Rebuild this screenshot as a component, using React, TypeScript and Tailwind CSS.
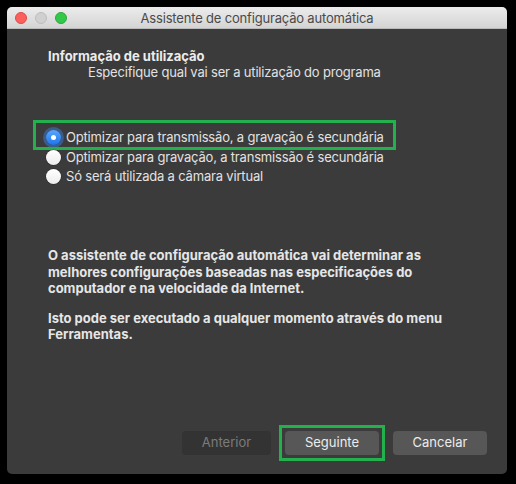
import React, { useState } from 'react';

const options = [
  'Optimizar para transmissão, a gravação é secundária',
  'Optimizar para gravação, a transmissão é secundária',
  'Só será utilizada a câmara virtual',
];

function Radio({ checked }: { checked: boolean }) {
  if (checked) {
    return (
      <span className="relative flex h-[15px] w-[15px] shrink-0 items-center justify-center rounded-full bg-gradient-to-b from-[#5aa7fb] to-[#1b74ee] shadow-[0_0_0_3px_rgba(60,130,230,0.45)]">
        <span className="h-[5px] w-[5px] rounded-full bg-white" />
      </span>
    );
  }
  return (
    <span className="h-[15px] w-[15px] shrink-0 rounded-full bg-gradient-to-b from-white to-[#ececec] shadow-[0_0_0_0.5px_rgba(0,0,0,0.35)]" />
  );
}

function RadioRow({ label, checked, onClick }: { label: string; checked: boolean; onClick: () => void }) {
  return (
    <div className="flex h-[19px] cursor-default items-center gap-[5px]" onClick={onClick}>
      <Radio checked={checked} />
      <span className="text-[13px] leading-[19px] tracking-[-0.18px] text-[#e2e2e2]">{label}</span>
    </div>
  );
}

export default function App() {
  const [choice, setChoice] = useState(0);

  return (
    <div
      className="h-[484px] w-[516px] bg-black pl-[7px] pt-[7px]"
      style={{ fontFamily: 'Inter, "Noto Sans", sans-serif' }}
    >
      <div className="flex h-[467px] w-[500px] flex-col overflow-hidden rounded-[5px] bg-[#3b3b3b]">
        {/* title bar */}
        <div className="relative flex h-[22px] shrink-0 items-center justify-center bg-gradient-to-b from-[#ececec] to-[#d4d4d4] border-b border-[#b9b9b9]">
          <div className="absolute left-[8px] top-[5px] flex gap-[8px]">
            <span className="h-[12px] w-[12px] rounded-full bg-[#fc605c] border-[0.5px] border-[#de4a45]" />
            <span className="h-[12px] w-[12px] rounded-full bg-[#d0d0d0] border-[0.5px] border-[#bdbdbd]" />
            <span className="h-[12px] w-[12px] rounded-full bg-[#34c84a] border-[0.5px] border-[#27aa3a]" />
          </div>
          <span className="text-[13px] leading-[16px] tracking-[-0.18px] text-[#4a4a4a]">
            Assistente de configuração automática
          </span>
        </div>

        {/* body */}
        <div className="flex flex-1 flex-col pl-[26px] pt-[19px]">
          <div className="ml-[15px] text-[13px] font-bold leading-[16px] text-[#ececec]">Informação de utilização</div>
          <div className="ml-[55px] text-[13px] leading-[16px] tracking-[-0.18px] text-[#e2e2e2]">
            Especifique qual vai ser a utilização do programa
          </div>

          <div className="mt-[40px] h-[30px] w-[363px] border-[3px] border-[#22b14c] pl-[10px] pt-[5px]">
            <RadioRow label={options[0]} checked={choice === 0} onClick={() => setChoice(0)} />
          </div>
          <div className="ml-[13px] mt-[-2px]">
            <RadioRow label={options[1]} checked={choice === 1} onClick={() => setChoice(1)} />
            <RadioRow label={options[2]} checked={choice === 2} onClick={() => setChoice(2)} />
          </div>

          <div className="ml-[15px] mt-[61px] w-[420px] text-[13px] font-bold leading-[16.5px] text-[#e6e6e6]">
            <p>
              O assistente de configuração automática vai determinar as melhores configurações baseadas nas
              especificações do computador e na velocidade da Internet.
            </p>
            <p className="mt-[13px]">Isto pode ser executado a qualquer momento através do menu Ferramentas.</p>
          </div>

          <div className="mt-auto flex items-center justify-end gap-[8px] pb-[13px] pr-[20px]">
            <button className="h-[24px] w-[89px] rounded-[4px] bg-[#333333] text-[13px] text-[#7b7b7b]">
              Anterior
            </button>
            <div className="border-[3px] border-[#22b14c] p-[3px]">
              <button className="block h-[24px] w-[94px] rounded-[4px] bg-[#575757] text-[13px] text-[#ececec]">
                Seguinte
              </button>
            </div>
            <button className="h-[24px] w-[94px] rounded-[4px] bg-[#575757] text-[13px] text-[#ececec]">
              Cancelar
            </button>
          </div>
        </div>
      </div>
    </div>
  );
}
